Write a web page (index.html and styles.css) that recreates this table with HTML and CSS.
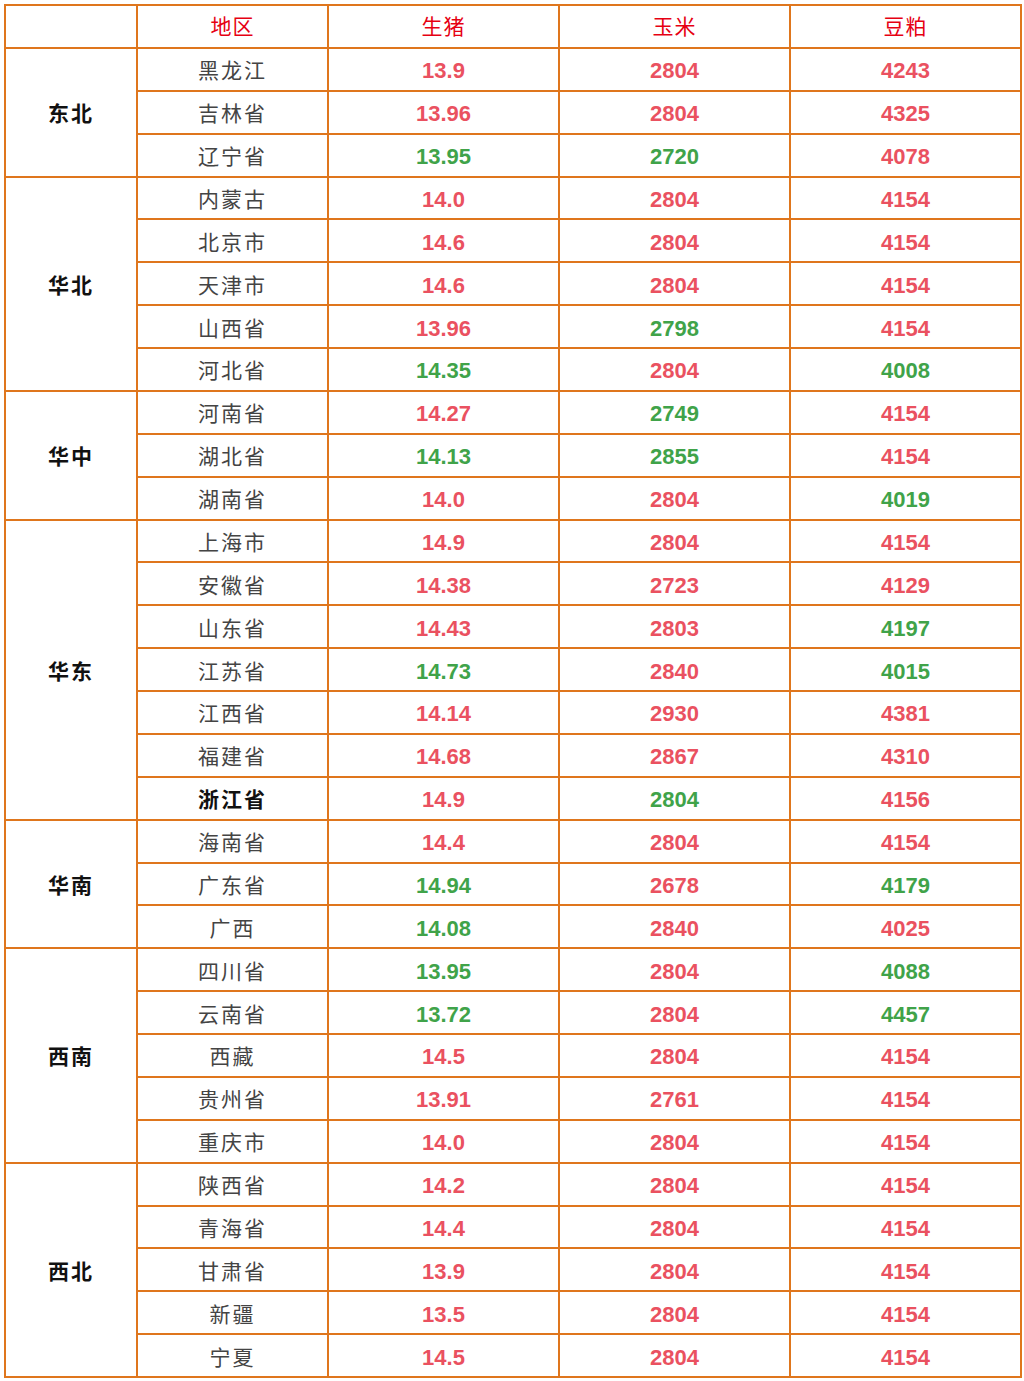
FILE: index.html
```html
<!DOCTYPE html>
<html lang="zh">
<head>
<meta charset="utf-8">
<title>价格表</title>
<link rel="stylesheet" href="styles.css">
</head>
<body>
<table class="price">
<colgroup><col class="c-region"><col class="c-prov"><col class="c-num"><col class="c-num"><col class="c-num"></colgroup>
<thead>
<tr><th></th><th>地区</th><th>生猪</th><th>玉米</th><th>豆粕</th></tr>
</thead>
<tbody>
<tr><td class="region" rowspan="3">东北</td><td class="prov">黑龙江</td><td class="r">13.9</td><td class="r">2804</td><td class="r">4243</td></tr>
<tr><td class="prov">吉林省</td><td class="r">13.96</td><td class="r">2804</td><td class="r">4325</td></tr>
<tr><td class="prov">辽宁省</td><td class="g">13.95</td><td class="g">2720</td><td class="r">4078</td></tr>

<tr><td class="region" rowspan="5">华北</td><td class="prov">内蒙古</td><td class="r">14.0</td><td class="r">2804</td><td class="r">4154</td></tr>
<tr><td class="prov">北京市</td><td class="r">14.6</td><td class="r">2804</td><td class="r">4154</td></tr>
<tr><td class="prov">天津市</td><td class="r">14.6</td><td class="r">2804</td><td class="r">4154</td></tr>
<tr><td class="prov">山西省</td><td class="r">13.96</td><td class="g">2798</td><td class="r">4154</td></tr>
<tr><td class="prov">河北省</td><td class="g">14.35</td><td class="r">2804</td><td class="g">4008</td></tr>

<tr><td class="region" rowspan="3">华中</td><td class="prov">河南省</td><td class="r">14.27</td><td class="g">2749</td><td class="r">4154</td></tr>
<tr><td class="prov">湖北省</td><td class="g">14.13</td><td class="g">2855</td><td class="r">4154</td></tr>
<tr><td class="prov">湖南省</td><td class="r">14.0</td><td class="r">2804</td><td class="g">4019</td></tr>

<tr><td class="region" rowspan="7">华东</td><td class="prov">上海市</td><td class="r">14.9</td><td class="r">2804</td><td class="r">4154</td></tr>
<tr><td class="prov">安徽省</td><td class="r">14.38</td><td class="r">2723</td><td class="r">4129</td></tr>
<tr><td class="prov">山东省</td><td class="r">14.43</td><td class="r">2803</td><td class="g">4197</td></tr>
<tr><td class="prov">江苏省</td><td class="g">14.73</td><td class="r">2840</td><td class="g">4015</td></tr>
<tr><td class="prov">江西省</td><td class="r">14.14</td><td class="r">2930</td><td class="r">4381</td></tr>
<tr><td class="prov">福建省</td><td class="r">14.68</td><td class="r">2867</td><td class="r">4310</td></tr>
<tr><td class="prov prov-strong">浙江省</td><td class="r">14.9</td><td class="g">2804</td><td class="r">4156</td></tr>

<tr><td class="region" rowspan="3">华南</td><td class="prov">海南省</td><td class="r">14.4</td><td class="r">2804</td><td class="r">4154</td></tr>
<tr><td class="prov">广东省</td><td class="g">14.94</td><td class="r">2678</td><td class="g">4179</td></tr>
<tr><td class="prov">广西</td><td class="g">14.08</td><td class="r">2840</td><td class="r">4025</td></tr>

<tr><td class="region" rowspan="5">西南</td><td class="prov">四川省</td><td class="g">13.95</td><td class="r">2804</td><td class="g">4088</td></tr>
<tr><td class="prov">云南省</td><td class="g">13.72</td><td class="r">2804</td><td class="g">4457</td></tr>
<tr><td class="prov">西藏</td><td class="r">14.5</td><td class="r">2804</td><td class="r">4154</td></tr>
<tr><td class="prov">贵州省</td><td class="r">13.91</td><td class="r">2761</td><td class="r">4154</td></tr>
<tr><td class="prov">重庆市</td><td class="r">14.0</td><td class="r">2804</td><td class="r">4154</td></tr>

<tr><td class="region" rowspan="5">西北</td><td class="prov">陕西省</td><td class="r">14.2</td><td class="r">2804</td><td class="r">4154</td></tr>
<tr><td class="prov">青海省</td><td class="r">14.4</td><td class="r">2804</td><td class="r">4154</td></tr>
<tr><td class="prov">甘肃省</td><td class="r">13.9</td><td class="r">2804</td><td class="r">4154</td></tr>
<tr><td class="prov">新疆</td><td class="r">13.5</td><td class="r">2804</td><td class="r">4154</td></tr>
<tr><td class="prov">宁夏</td><td class="r">14.5</td><td class="r">2804</td><td class="r">4154</td></tr>
</tbody>
</table>
</body>
</html>
```
FILE: styles.css
```css
html, body {
  margin: 0;
  padding: 0;
  background: #ffffff;
}
body {
  padding: 4px 0 0 4px;
}
.price {
  border-collapse: collapse;
  width: 1016px;
  table-layout: fixed;
}
.c-region { width: 132px; }
.c-prov { width: 191px; }
.c-num { width: 231px; }
.price tr {
  height: 42.875px;
}
.price th,
.price td {
  border: 2px solid #df761d;
  padding: 0;
  text-align: center;
  vertical-align: middle;
}
.price th {
  font-family: "Noto Sans CJK SC", sans-serif;
  font-weight: normal;
  font-size: 21px;
  color: #e60012;
  letter-spacing: 1px;
  padding-bottom: 2px;
}
.region {
  font-family: "Noto Sans CJK SC", sans-serif;
  font-weight: bold;
  font-size: 21px;
  color: #111111;
  letter-spacing: 2px;
}
.prov {
  font-family: "Noto Sans CJK SC", sans-serif;
  font-size: 21px;
  color: #444444;
  letter-spacing: 2px;
}
.prov-strong {
  color: #111111;
  font-weight: bold;
}
.price td.r,
.price td.g {
  font-family: "Liberation Sans", Arial, sans-serif;
  font-weight: bold;
  font-size: 22px;
  padding-top: 4px;
}
.r { color: #ea5160; }
.g { color: #40a349; }
```
